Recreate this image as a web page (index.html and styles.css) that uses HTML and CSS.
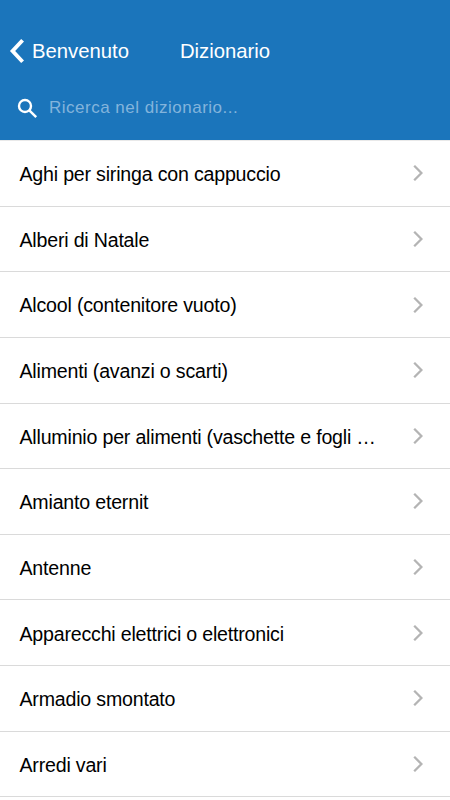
FILE: index.html
```html
<!DOCTYPE html>
<html lang="it">
<head>
<meta charset="utf-8">
<title>Dizionario</title>
<link rel="stylesheet" href="styles.css">
</head>
<body>
<header class="header">
  <nav class="navbar">
    <a class="back"><svg class="back-icon" width="15" height="26" viewBox="0 0 15 26"><path d="M13.6 2.2L3.6 13L13.6 23.8"/></svg><span class="back-label">Benvenuto</span></a>
    <h1 class="title"><span>Dizionario</span></h1>
  </nav>
  <div class="search">
    <svg class="search-icon" width="20" height="20" viewBox="0 0 20 20"><circle cx="7" cy="7" r="6"/><path d="M11.3 11.3L18.2 18.2"/></svg>
    <span class="placeholder">Ricerca nel dizionario...</span>
  </div>
</header>
<ul class="list">
  <li class="row"><span class="label">Aghi per siringa con cappuccio</span><svg class="chevron" viewBox="0 0 10 16"><path d="M1.2 .8L8.4 8L1.2 15.2"/></svg></li>
  <li class="row"><span class="label">Alberi di Natale</span><svg class="chevron" viewBox="0 0 10 16"><path d="M1.2 .8L8.4 8L1.2 15.2"/></svg></li>
  <li class="row"><span class="label">Alcool (contenitore vuoto)</span><svg class="chevron" viewBox="0 0 10 16"><path d="M1.2 .8L8.4 8L1.2 15.2"/></svg></li>
  <li class="row"><span class="label">Alimenti (avanzi o scarti)</span><svg class="chevron" viewBox="0 0 10 16"><path d="M1.2 .8L8.4 8L1.2 15.2"/></svg></li>
  <li class="row"><span class="label">Alluminio per alimenti (vaschette e fogli …</span><svg class="chevron" viewBox="0 0 10 16"><path d="M1.2 .8L8.4 8L1.2 15.2"/></svg></li>
  <li class="row"><span class="label">Amianto eternit</span><svg class="chevron" viewBox="0 0 10 16"><path d="M1.2 .8L8.4 8L1.2 15.2"/></svg></li>
  <li class="row"><span class="label">Antenne</span><svg class="chevron" viewBox="0 0 10 16"><path d="M1.2 .8L8.4 8L1.2 15.2"/></svg></li>
  <li class="row"><span class="label">Apparecchi elettrici o elettronici</span><svg class="chevron" viewBox="0 0 10 16"><path d="M1.2 .8L8.4 8L1.2 15.2"/></svg></li>
  <li class="row"><span class="label">Armadio smontato</span><svg class="chevron" viewBox="0 0 10 16"><path d="M1.2 .8L8.4 8L1.2 15.2"/></svg></li>
  <li class="row"><span class="label">Arredi vari</span><svg class="chevron" viewBox="0 0 10 16"><path d="M1.2 .8L8.4 8L1.2 15.2"/></svg></li>
</ul>
</body>
</html>
```
FILE: styles.css
```css
* { box-sizing: border-box; }
body { margin: 0; height: 800px; overflow: hidden; background: #fff; color: #000; font-family: "Liberation Sans", Arial, sans-serif; }
.header { height: 140px; padding-top: 30px; background: #1b75bb; color: #fff; }
.navbar { display: grid; grid-template-columns: 150px 150px 150px; height: 42px; align-items: center; }
.back { display: flex; align-items: center; padding-left: 9px; gap: 8px; font-size: 20.3px; }
.back-icon { flex: none; fill: none; stroke: #fff; stroke-width: 3.9; }
.title { margin: 0; font-size: 20.3px; font-weight: 400; text-align: center; }
.search { display: flex; align-items: center; height: 70px; padding: 1px 0 0 18px; gap: 11px; }
.search-icon { margin-top: 3px; overflow: visible; fill: none; stroke: #fff; stroke-width: 2.4; }
.placeholder { font-size: 17px; letter-spacing: .5px; color: #83b4dc; }
.list { margin: 0; padding: 0; list-style: none; border-top: 1px solid #e9e9e9; }
.row { display: flex; align-items: center; justify-content: space-between; height: 65.64px; padding: 2px 27.5px 0 19.5px; border-bottom: 1px solid #dadada; font-size: 19.6px; letter-spacing: -.2px; }
.label { margin-top: .8px; white-space: nowrap; }
.chevron { width: 10px; height: 16px; margin-top: -2px; fill: none; stroke: #b4b4b4; stroke-width: 2.3; }
```
